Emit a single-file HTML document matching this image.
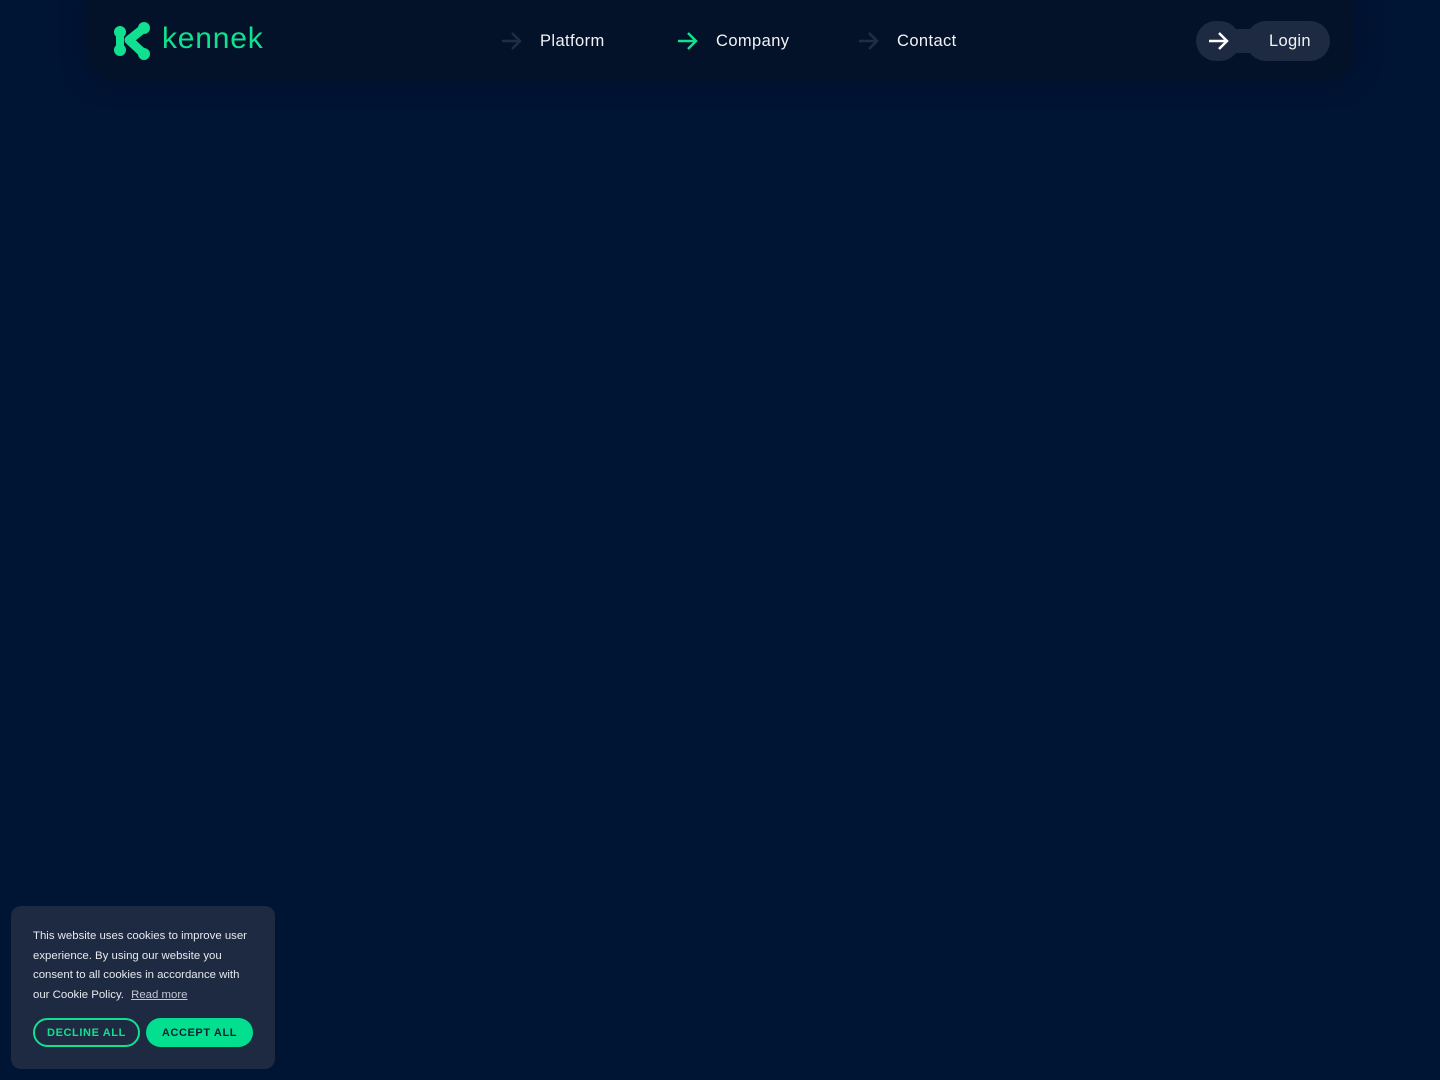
<!DOCTYPE html>
<html><head><meta charset="utf-8"><style>
*{margin:0;padding:0;box-sizing:border-box}
body{width:1440px;height:1080px;background:#001434;font-family:"Liberation Sans",sans-serif;position:relative;overflow:hidden}
.nav{position:absolute;left:88px;top:0;width:1266px;height:80px;background:#031129;border-radius:0 0 28px 28px;box-shadow:0 0 20px 6px rgba(3,17,41,.6)}
.logo{position:absolute;left:114px;top:20px}
.brand{position:absolute;left:162px;top:22px;font-size:30px;color:#10e08f;letter-spacing:.8px}
.item{position:absolute;top:31px;font-size:16.5px;letter-spacing:.4px;color:#f1f3f6;display:flex;align-items:center}
.item svg{margin-right:18px}
.login{position:absolute;left:1196px;top:21px;width:134px;height:40px}
.login .a{position:absolute;left:0;top:0;width:44px;height:40px;border-radius:20px;background:#1d2a42}
.login .b{position:absolute;left:50px;top:0;width:84px;height:40px;border-radius:20px;background:#1d2a42}
.login .c{position:absolute;left:30px;top:8px;width:30px;height:24px;background:#1d2a42}
.login span{position:absolute;left:73px;top:11px;color:#f1f3f6;font-size:16.5px;letter-spacing:.3px}
.cookie{position:absolute;left:11px;top:906px;width:264px;height:163px;background:#1e2a42;border-radius:10px}
.cookie p{position:absolute;left:22px;top:21px;width:225px;font-size:11.4px;line-height:19.7px;color:#e6e9ee}
.cookie p u{color:#c3c8d2;margin-left:4px}
.btn{position:absolute;top:112px;height:29px;border-radius:15px;font-size:11px;font-weight:bold;letter-spacing:.6px;display:flex;align-items:center;justify-content:center}
.d{left:22px;width:107px;border:2px solid #10e08f;color:#10e08f}
.ac{left:135px;width:107px;background:#02e08f;color:#0e2035}
</style></head><body>
<div class="nav"></div>
<svg class="logo" width="40" height="42" viewBox="0 0 40 42">
<g stroke="#10e08f" stroke-linecap="round" stroke-linejoin="round" fill="none">
<path d="M6 12 L6 30" stroke-width="8"/>
<path d="M30 8 L15 20 L30 34" stroke-width="9"/>
</g>
<circle cx="30" cy="8" r="6" fill="#10e08f"/><circle cx="30" cy="34" r="6" fill="#10e08f"/>
<circle cx="6" cy="12" r="6" fill="#10e08f"/><circle cx="6" cy="30" r="6" fill="#10e08f"/>
</svg>
<div class="brand">kennek</div>
<div class="item" style="left:501px"><svg width="21" height="20" viewBox="0 0 21 20"><path d="M1 10H19M11 2L19 10L11 18" stroke="#1f2d45" stroke-width="2.5" fill="none"/></svg>Platform</div>
<div class="item" style="left:677px"><svg width="21" height="20" viewBox="0 0 21 20"><path d="M1 10H19M11 2L19 10L11 18" stroke="#10e08f" stroke-width="2.5" fill="none"/></svg>Company</div>
<div class="item" style="left:858px"><svg width="21" height="20" viewBox="0 0 21 20"><path d="M1 10H19M11 2L19 10L11 18" stroke="#1f2d45" stroke-width="2.5" fill="none"/></svg>Contact</div>
<div class="login"><div class="a"></div><div class="c"></div><div class="b"></div>
<svg style="position:absolute;left:12px;top:10px" width="21" height="20" viewBox="0 0 21 20"><path d="M1 10H19M11 2L19 10L11 18" stroke="#fff" stroke-width="2.5" fill="none"/></svg>
<span>Login</span></div>
<div class="cookie">
<p>This website uses cookies to improve user experience. By using our website you consent to all cookies in accordance with our Cookie Policy. <u>Read more</u></p>
<div class="btn d">DECLINE ALL</div><div class="btn ac">ACCEPT ALL</div>
</div>
</body></html>
